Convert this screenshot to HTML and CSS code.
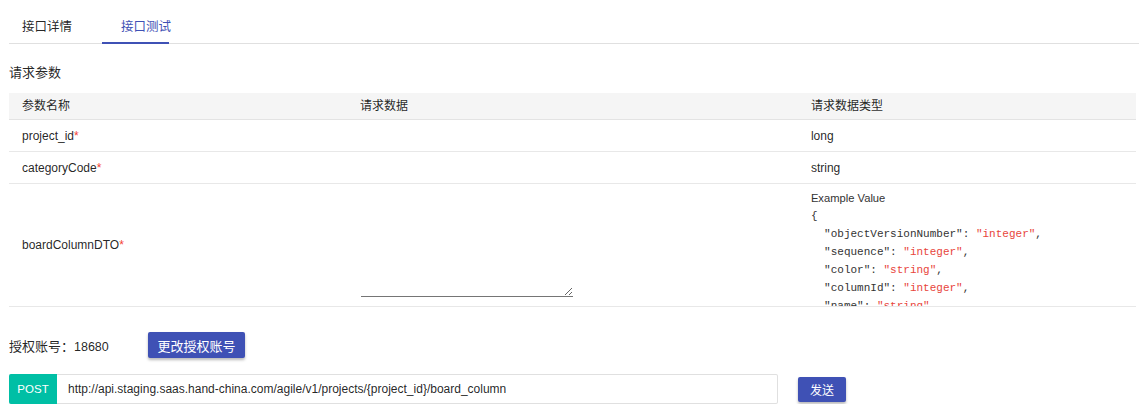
FILE: index.html
```html
<!DOCTYPE html>
<html lang="zh-CN">
<head>
<meta charset="utf-8">
<title>接口测试</title>
<link rel="stylesheet" href="styles.css">
</head>
<body>
<div class="page">
  <div class="tabs">
    <div class="tab">接口详情</div>
    <div class="tab active">接口测试</div>
    <span class="ink"></span>
  </div>

  <div class="section-title">请求参数</div>

  <div class="params">
    <div class="row head">
      <div class="cell">参数名称</div>
      <div class="cell">请求数据</div>
      <div class="cell">请求数据类型</div>
    </div>
    <div class="row">
      <div class="cell">project_id<span class="req">*</span></div>
      <div class="cell"></div>
      <div class="cell">long</div>
    </div>
    <div class="row">
      <div class="cell">categoryCode<span class="req">*</span></div>
      <div class="cell"></div>
      <div class="cell">string</div>
    </div>
    <div class="row body-row">
      <div class="cell">boardColumnDTO<span class="req">*</span></div>
      <div class="cell"><textarea class="body-input"></textarea></div>
      <div class="cell example">
        <div class="example-title">Example Value</div>
        <div class="example-code"><pre>{
  "objectVersionNumber": <span class="v">"integer"</span>,
  "sequence": <span class="v">"integer"</span>,
  "color": <span class="v">"string"</span>,
  "columnId": <span class="v">"integer"</span>,
  "name": <span class="v">"string"</span>,
  "projectId": <span class="v">"integer"</span>,
  "boardId": <span class="v">"integer"</span>,
  "categoryCode": <span class="v">"string"</span>,
  "maxNum": <span class="v">"integer"</span>,
  "minNum": <span class="v">"integer"</span>,
  "statusId": <span class="v">"integer"</span>,
  "colorCode": <span class="v">"string"</span>,
  "boardName": <span class="v">"string"</span>
}</pre></div>
      </div>
    </div>
  </div>

  <div class="auth">
    <span class="auth-label">授权账号：<span class="num">18680</span></span>
    <button class="btn btn-auth" type="button">更改授权账号</button>
  </div>

  <div class="request">
    <div class="url-box">
      <span class="method">POST</span>
      <span class="url">http://api.staging.saas.hand-china.com/agile/v1/projects/{project_id}/board_column</span>
    </div>
    <button class="btn btn-send" type="button">发送</button>
  </div>
</div>
</body>
</html>
```

FILE: styles.css
```css
* { box-sizing: border-box; }

body {
  margin: 0;
  background: #fff;
  font-family: "Liberation Sans", "Noto Sans CJK SC", sans-serif;
  font-size: 12px;
  color: rgba(0, 0, 0, 0.87);
}

.page {
  padding: 0 3px 0 9px;
}

.tabs {
  position: relative;
  display: flex;
  height: 44px;
  margin-right: -3px;
  border-bottom: 1px solid #e0e0e0;
}

.tab {
  padding: 18px 0 0 13px;
  width: 93px;
  line-height: 18px;
  font-size: 12.5px;
  color: rgba(0, 0, 0, 0.87);
}

.tab.active {
  padding-left: 19px;
  color: #3f51b5;
}

.ink {
  position: absolute;
  left: 93px;
  bottom: -1px;
  width: 67px;
  height: 2px;
  background: #3f51b5;
}

.section-title {
  margin-top: 19px;
  margin-bottom: 10px;
  font-size: 13px;
  line-height: 20px;
}

.params {
  width: 100%;
}

.row {
  display: grid;
  grid-template-columns: 3fr 4fr 3fr;
  min-height: 32px;
  border-bottom: 1px solid #e8e8e8;
}

.row.head {
  min-height: 27px;
  background: #f5f5f5;
  border-bottom: 1px solid #e3e3e3;
}

.cell {
  display: flex;
  align-items: center;
  padding-left: 13px;
  line-height: 18px;
}

.req {
  color: #f44336;
}

.body-input {
  display: block;
  width: 212px;
  height: 104px;
  margin-left: 1px;
  border: none;
  border-bottom: 1px solid #757575;
  background: transparent;
  outline: none;
  font: inherit;
}

.cell.example {
  display: block;
  padding-top: 5px;
}

.example-title {
  font-size: 11.2px;
  line-height: 18px;
  color: #333;
}

.example-code {
  width: 312px;
  height: 99px;
  overflow-y: scroll;
}

.example-code::-webkit-scrollbar {
  width: 6px;
}

.example-code::-webkit-scrollbar-track {
  background: transparent;
}

.example-code::-webkit-scrollbar-thumb {
  background: #d5d5d5;
}

.example-code pre {
  margin: 0;
  font-family: "Liberation Mono", "DejaVu Sans Mono", monospace;
  font-size: 11px;
  line-height: 18px;
  color: #333;
}

.example-code .v {
  color: #e8453c;
}

.auth {
  display: flex;
  align-items: center;
  margin-top: 25px;
}

.auth-label {
  width: 139px;
  font-size: 13px;
}

.auth-label .num {
  font-size: 12.5px;
}

.btn {
  border: none;
  border-radius: 2px;
  background: #3f51b5;
  color: #fff;
  font-family: inherit;
  cursor: pointer;
  box-shadow: 0 2px 3px rgba(0, 0, 0, 0.28);
}

.btn-auth {
  height: 26px;
  width: 97px;
  padding: 0;
  font-size: 13px;
}

.request {
  display: flex;
  align-items: center;
  margin-top: 16px;
}

.url-box {
  display: flex;
  align-items: stretch;
  width: 769px;
  height: 30px;
  border: 1px solid #e0e0e0;
  border-left: none;
  border-radius: 2px;
}

.method {
  display: flex;
  align-items: center;
  justify-content: center;
  width: 48px;
  margin: -1px 0;
  background: #00bfa5;
  color: #fff;
  font-size: 11.5px;
  border-radius: 2px 0 0 2px;
}

.url {
  display: flex;
  align-items: center;
  padding-left: 11px;
  color: rgba(0, 0, 0, 0.87);
}

.btn-send {
  margin-left: 20px;
  width: 48px;
  height: 25px;
  padding: 0;
  font-size: 12px;
}
```
